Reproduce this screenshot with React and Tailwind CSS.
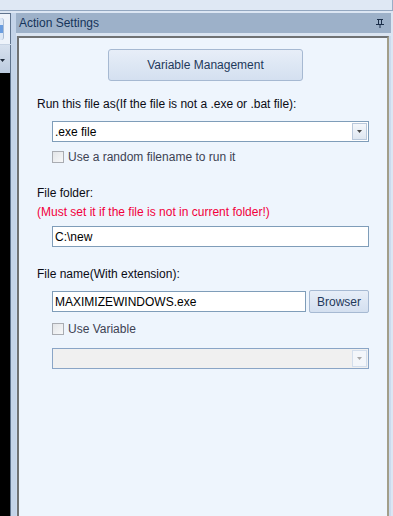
import React from 'react';

// Action Settings docked panel — classic WinForms look, blue Office theme.

function DropArrow({ disabled = false }) {
  return (
    <div
      className={`mr-[1px] flex h-[17px] w-[15px] items-center justify-center border ${
        disabled
          ? 'border-[#d3deec] bg-[#f3f6fa]'
          : 'border-[#b9c8db] bg-gradient-to-b from-[#f4f7fb] to-[#dfe7f1]'
      }`}
    >
      <svg width="5" height="3" viewBox="0 0 5 3">
        <path d="M0 0H5L2.5 3Z" fill={disabled ? '#a8a8a8' : '#4a4a4a'} />
      </svg>
    </div>
  );
}

function Combo({ value = '', disabled = false }) {
  return (
    <div
      className={`ml-[15px] flex h-[21px] items-center border ${
        disabled ? 'border-[#8aa5c6] bg-[#f0f0f0]' : 'border-[#7f9db9] bg-white'
      }`}
    >
      <span className="flex-1 pl-[2px] leading-[16px] text-[#000]">{value}</span>
      <DropArrow disabled={disabled} />
    </div>
  );
}

function Check({ label, className = '' }) {
  return (
    <div className={`ml-[15px] flex h-[12px] items-center gap-[4px] ${className}`}>
      <span className="h-[12px] w-[12px] border border-[#a9acb2] bg-gradient-to-br from-[#e3e5e8] to-[#f7f8f9]" />
      <span className="leading-[14px] text-[#3d4253]">{label}</span>
    </div>
  );
}

function Label({ children, className = '', tone = 'text-[#0b0b14]' }) {
  return <div className={`h-[16px] leading-[16px] ${tone} ${className}`}>{children}</div>;
}

function Pin() {
  return (
    <svg width="8" height="9" viewBox="0 0 8 9" fill="none" stroke="#1a2d48" strokeWidth="1">
      <path d="M1 0.5H7M2.5 0.5V5.5M5.5 0.5V5.5M0 5.5H8M4 5.5V9" />
    </svg>
  );
}

export default function App() {
  return (
    <div className="flex h-[516px] w-[393px] flex-col overflow-hidden bg-[#dce6f3] font-['Liberation_Sans',Arial,sans-serif] text-[12px]">
      {/* top strip */}
      <div className="h-[10px] shrink-0 border-r border-[#9aaec6] bg-[#dfe8f4]" />
      <div className="h-px shrink-0 bg-[#93a7c0]" />

      <div className="flex min-h-0 flex-1 pt-[2px]">
        {/* left docked pane, mostly cut off */}
        <div className="flex w-[11px] shrink-0 flex-col">
          <div className="flex h-[31px] items-center border-r border-t border-[#5f738d] bg-[#eef3fa]">
            <div className="flex h-[22px] w-[4px] items-center rounded-r-[3px] border-r border-[#a9bcd5] bg-[#dde8f6]">
              <span className="h-[8px] w-[3px] bg-[#6a9de0]" />
            </div>
          </div>
          <div className="h-px bg-[#c7d3e3]" />
          <div className="flex h-[28px] items-center border-r border-[#5f738d] bg-gradient-to-b from-[#d7e1ee] to-[#bccbdf] pt-[2px]">
            <svg width="5" height="3" viewBox="0 0 5 3">
              <path d="M0 0H5L2.5 3Z" fill="#1e2a3a" />
            </svg>
          </div>
          <div className="flex-1 border-r border-[#5f738d] bg-black" />
        </div>

        <div className="w-[5px] shrink-0 bg-[#c4d4e9]" />

        {/* Action Settings panel */}
        <div className="flex w-[375px] shrink-0 flex-col bg-[#cbdaee]">
          <div className="flex h-[20px] shrink-0 items-center justify-between bg-[#9db1c9] pl-[3px] pr-[7px]">
            <span className="text-[#15345a]">Action Settings</span>
            <Pin />
          </div>
          <div className="h-[3px] shrink-0 bg-[#dbe5f2]" />

          <div className="ml-[1px] w-[372px] flex-1 border-l-2 border-r-2 border-t-2 border-l-[#707274] border-r-[#a29e8a] border-t-[#707274] bg-[#eef5fd] px-[18px]">
            <button className="ml-[71px] mt-[11px] h-[32px] w-[195px] rounded-[3px] border border-[#a6b9d2] bg-gradient-to-b from-[#e7eef8] to-[#d4e0f0] text-[12px] text-[#1e395b]">
              Variable Management
            </button>

            <Label className="mt-[15px]">Run this file as(If the file is not a .exe or .bat file):</Label>
            <div className="mt-[9px]">
              <Combo value=".exe file" />
            </div>
            <Check label="Use a random filename to run it" className="mt-[9px]" />

            <Label className="mt-[22px]">File folder:</Label>
            <Label className="mt-[3px]" tone="text-[#f2003c]">
              (Must set it if the file is not in current folder!)
            </Label>
            <div className="ml-[15px] mt-[6px] flex h-[21px] items-center border border-[#7f9db9] bg-white pl-[2px] text-[#000]">
              C:\new
            </div>

            <Label className="mt-[19px]">File name(With extension):</Label>
            <div className="ml-[15px] mt-[8px] flex h-[23px] items-center gap-[3px]">
              <div className="flex h-[21px] w-[254px] items-center border border-[#7f9db9] bg-white pl-[2px] text-[#000]">
                MAXIMIZEWINDOWS.exe
              </div>
              <button className="h-[23px] flex-1 rounded-[2px] border border-[#a6b9d2] bg-gradient-to-b from-[#e7eef8] to-[#d4e0f0] text-[12px] text-[#1e395b]">
                Browser
              </button>
            </div>
            <Check label="Use Variable" className="mt-[10px]" />
            <div className="mt-[13px]">
              <Combo disabled />
            </div>
          </div>
        </div>
        <div className="flex-1 bg-[#dce6f3]" />
      </div>
    </div>
  );
}
